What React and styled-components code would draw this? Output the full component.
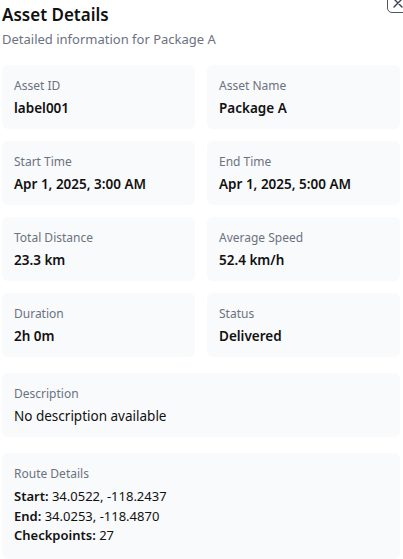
import React from 'react'
import styled, { createGlobalStyle } from 'styled-components'

const GlobalStyle = createGlobalStyle`
  body {
    margin: 0;
    background: #fff;
    font-family: "Noto Sans", "Open Sans", sans-serif;
    color: #111827;
  }
`

const Dialog = styled.div`
  position: relative;
  width: 403px;
  height: 559px;
  overflow: hidden;
  padding: 0 3px 0 2px;
  box-sizing: border-box;
`

const CloseButton = styled.button`
  position: absolute;
  top: -8px;
  right: -6px;
  width: 22px;
  height: 21px;
  border: 1.5px solid #4b5563;
  border-radius: 5px;
  background: #fff;
  display: flex;
  align-items: center;
  justify-content: center;
  padding: 0;
  color: #374151;
`

const Header = styled.div`
  padding-top: 4px;
  margin-bottom: 17px;
`

const Title = styled.h2`
  margin: 0;
  font-size: 17px;
  font-weight: 600;
  line-height: 22px;
  color: #111;
`

const Subtitle = styled.p`
  margin: 4px 0 0;
  font-size: 13px;
  line-height: 18px;
  color: #6b7280;
`

const Grid = styled.div`
  display: grid;
  grid-template-columns: 1fr 1fr;
  gap: 12px;
`

const Card = styled.div`
  background: #f9fafb;
  border-radius: 6px;
  padding: 12px 12px ${p => (p.$tall ? '13px' : '12px')};
  height: ${p => p.$h || 'auto'};
  box-sizing: border-box;
  grid-column: ${p => (p.$wide ? '1 / -1' : 'auto')};
`

const Label = styled.div`
  font-size: 12px;
  line-height: 18px;
  color: #6b7280;
`

const Value = styled.div`
  margin-top: 3px;
  font-size: 13.5px;
  line-height: 20px;
  font-weight: ${p => (p.$plain ? 400 : 600)};
  color: #111;
`

const Lines = styled.div`
  margin-top: 4px;
`

const Line = styled.div`
  font-size: 13px;
  line-height: 19.5px;
  color: #111;
  b { font-weight: 600; }
`

const items = [
  ['Asset ID', 'label001'],
  ['Asset Name', 'Package A'],
  ['Start Time', 'Apr 1, 2025, 3:00 AM'],
  ['End Time', 'Apr 1, 2025, 5:00 AM'],
  ['Total Distance', '23.3 km'],
  ['Average Speed', '52.4 km/h'],
  ['Duration', '2h 0m'],
  ['Status', 'Delivered'],
]

export default function App() {
  return (
    <Dialog>
      <GlobalStyle />
      <CloseButton aria-label="Close">
        <svg width="12" height="12" viewBox="0 0 12 12" fill="none" stroke="currentColor" strokeWidth="1.4" strokeLinecap="round">
          <path d="M2 2l8 8M10 2l-8 8" />
        </svg>
      </CloseButton>
      <Header>
        <Title>Asset Details</Title>
        <Subtitle>Detailed information for Package A</Subtitle>
      </Header>
      <Grid>
        {items.map(([l, v]) => (
          <Card key={l} $h="64px">
            <Label>{l}</Label>
            <Value>{v}</Value>
          </Card>
        ))}
        <Card $wide $h="64px" style={{ marginTop: 4 }}>
          <Label>Description</Label>
          <Value $plain>No description available</Value>
        </Card>
        <Card $wide $tall style={{ marginTop: 4 }}>
          <Label>Route Details</Label>
          <Lines>
            <Line><b>Start:</b> 34.0522, -118.2437</Line>
            <Line><b>End:</b> 34.0253, -118.4870</Line>
            <Line><b>Checkpoints:</b> 27</Line>
          </Lines>
        </Card>
      </Grid>
    </Dialog>
  )
}
